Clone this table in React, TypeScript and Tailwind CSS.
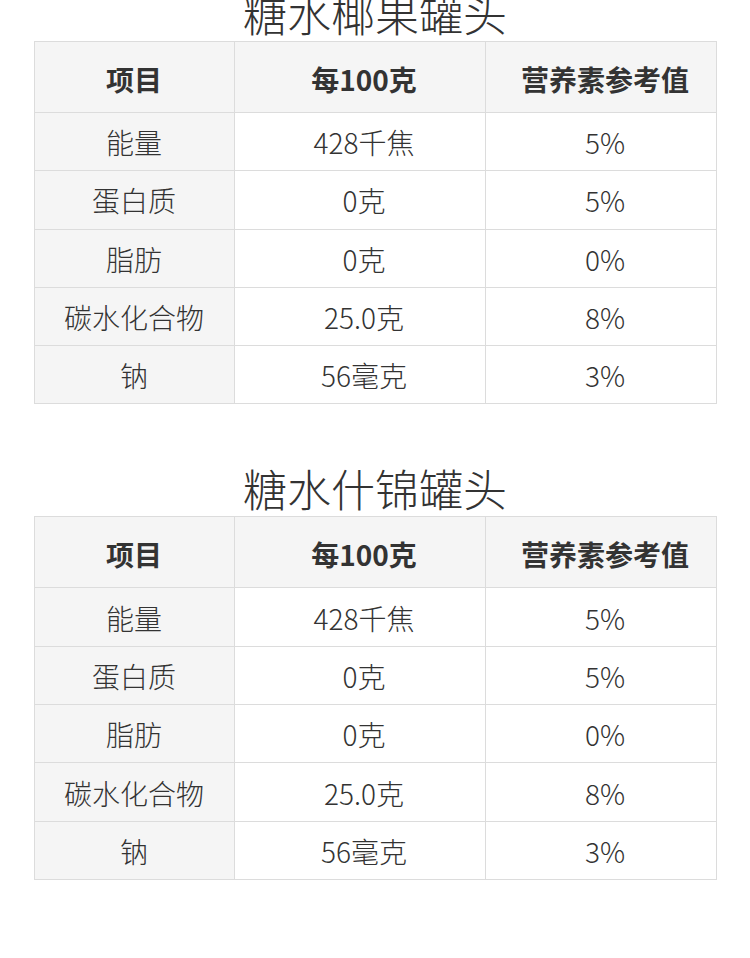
import React from "react";

const rows = [
  ["能量", "428千焦", "5%"],
  ["蛋白质", "0克", "5%"],
  ["脂肪", "0克", "0%"],
  ["碳水化合物", "25.0克", "8%"],
  ["钠", "56毫克", "3%"],
];

const font = { fontFamily: '"Noto Sans CJK SC", "Noto Sans", sans-serif' };

function Section({ title }: { title: string }) {
  return (
    <section className="flex flex-col items-center">
      <h2 className="h-[56px] text-[44px] leading-[56px] font-light text-[#333]">
        {title}
      </h2>
      <table className="w-[682px] border-collapse table-fixed">
        <colgroup>
          <col className="w-[200px]" />
          <col className="w-[251px]" />
          <col className="w-[231px]" />
        </colgroup>
        <thead>
          <tr className="h-[71px] bg-[#f5f5f5]">
            <th className="border border-[#dcdcdc] text-[28px] font-bold text-[#333] text-center pt-[3px]">
              项目
            </th>
            <th className="border border-[#dcdcdc] text-[28px] font-bold text-[#333] text-center pl-[9px] pt-[3px]">
              每100克
            </th>
            <th className="border border-[#dcdcdc] text-[28px] font-bold text-[#333] text-center pl-[9px] pt-[3px]">
              营养素参考值
            </th>
          </tr>
        </thead>
        <tbody>
          {rows.map((r, i) => (
            <tr key={i} className="h-[58.3px]">
              <td className="border border-[#dcdcdc] bg-[#f5f5f5] text-[28px] font-light text-[#333] text-center pt-[1px]">
                {r[0]}
              </td>
              <td className="border border-[#dcdcdc] bg-white text-[28px] font-light text-[#333] text-center pl-[9px] pt-[1px]">
                {r[1]}
              </td>
              <td className="border border-[#dcdcdc] bg-white text-[28px] font-light text-[#333] text-center pl-[9px] pt-[1px]">
                {r[2]}
              </td>
            </tr>
          ))}
        </tbody>
      </table>
    </section>
  );
}

export default function App() {
  return (
    <div className="w-[750px] h-[958px] overflow-hidden bg-white" style={font}>
      <div className="-mt-[15px] flex flex-col gap-[56px]">
        <Section title="糖水椰果罐头" />
        <Section title="糖水什锦罐头" />
      </div>
    </div>
  );
}
